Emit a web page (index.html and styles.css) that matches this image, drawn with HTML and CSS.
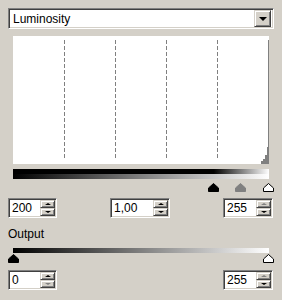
FILE: index.html
```html
<!DOCTYPE html>
<html lang="en">
<head>
  <meta charset="UTF-8">
  <title>Levels</title>
  <link rel="stylesheet" href="styles.css">
</head>
<body>
  <div class="levels">

    <!-- Channel selector -->
    <div class="combo">
      <span class="combo-text">Luminosity</span>
      <span class="combo-btn"><i class="tri-down"></i></span>
    </div>

    <!-- Histogram -->
    <div class="hist">
      <svg width="256" height="128" viewBox="0 0 256 128">
        <g stroke="#808080" stroke-width="1" stroke-dasharray="4 2">
          <line x1="51.5" y1="4" x2="51.5" y2="124" />
          <line x1="102.5" y1="4" x2="102.5" y2="124" />
          <line x1="153.5" y1="4" x2="153.5" y2="124" />
          <line x1="204.5" y1="4" x2="204.5" y2="124" />
        </g>
        <polygon fill="#808080" points="248,128 248,125 250,125 250,123 252,123 252,119 254,119 254,111 255,111 255,4 256,4 256,128" />
      </svg>
    </div>

    <!-- Input levels -->
    <div class="ramp ramp-in"><div class="ramp-top"></div><div class="ramp-bottom"></div></div>
    <div class="handles">
      <svg class="handle" style="left:200px" width="11" height="9" viewBox="0 0 11 9"><polygon points="5.5,0.5 10.5,5 10.5,8.5 0.5,8.5 0.5,5" fill="#000" stroke="#000" /></svg>
      <svg class="handle" style="left:227px" width="11" height="9" viewBox="0 0 11 9"><polygon points="5.5,0.5 10.5,5 10.5,8.5 0.5,8.5 0.5,5" fill="#808080" stroke="#808080" /></svg>
      <svg class="handle" style="left:255px" width="11" height="9" viewBox="0 0 11 9"><polygon points="5.5,0.5 10.5,5 10.5,8.5 0.5,8.5 0.5,5" fill="#fff" stroke="#000" /></svg>
    </div>
    <div class="spin-row">
      <div class="spin spin-sm">
        <span class="spin-val">200</span>
        <span class="spin-btns"><b class="sbtn"><i class="tri-up"></i></b><b class="sbtn"><i class="tri-down small"></i></b></span>
      </div>
      <div class="spin spin-md">
        <span class="spin-val">1,00</span>
        <span class="spin-btns"><b class="sbtn"><i class="tri-up"></i></b><b class="sbtn"><i class="tri-down small"></i></b></span>
      </div>
      <div class="spin spin-sm2">
        <span class="spin-val">255</span>
        <span class="spin-btns"><b class="sbtn"><i class="tri-up off"></i></b><b class="sbtn"><i class="tri-down small"></i></b></span>
      </div>
    </div>

    <!-- Output levels -->
    <div class="label">Output</div>
    <div class="ramp ramp-out"></div>
    <div class="handles">
      <svg class="handle" style="left:0px" width="11" height="9" viewBox="0 0 11 9"><polygon points="5.5,0.5 10.5,5 10.5,8.5 0.5,8.5 0.5,5" fill="#000" stroke="#000" /></svg>
      <svg class="handle" style="left:255px" width="11" height="9" viewBox="0 0 11 9"><polygon points="5.5,0.5 10.5,5 10.5,8.5 0.5,8.5 0.5,5" fill="#fff" stroke="#000" /></svg>
    </div>
    <div class="spin-row spin-row-out">
      <div class="spin spin-sm">
        <span class="spin-val">0</span>
        <span class="spin-btns"><b class="sbtn"><i class="tri-up"></i></b><b class="sbtn"><i class="tri-down small off"></i></b></span>
      </div>
      <div class="spin spin-sm2">
        <span class="spin-val">255</span>
        <span class="spin-btns"><b class="sbtn"><i class="tri-up off"></i></b><b class="sbtn"><i class="tri-down small"></i></b></span>
      </div>
    </div>

  </div>
</body>
</html>
```

FILE: styles.css
```css
* {
  box-sizing: border-box;
}

body {
  margin: 0;
  background: #d4d0c8;
  font-family: 'Liberation Sans', Arial, sans-serif;
  font-size: 12px;
  color: #000;
}

.levels {
  padding: 8px 0 0 8px;
  width: 282px;
}

/* sunken field, classic look */
.combo,
.spin {
  display: flex;
  align-items: center;
  background: #fff;
  border: 1px solid;
  border-color: #808080 #fff #fff #808080;
  box-shadow: inset 1px 1px #404040, inset -1px -1px #d4d0c8;
  padding: 2px;
}

.combo {
  width: 266px;
  height: 21px;
}

.combo-text {
  flex: 1;
  padding-left: 2px;
  line-height: 14px;
}

.combo-btn,
.sbtn {
  display: flex;
  align-items: center;
  justify-content: center;
  background: #d4d0c8;
  border: 1px solid;
  border-color: #d4d0c8 #404040 #404040 #d4d0c8;
  box-shadow: inset 1px 1px #fff, inset -1px -1px #808080;
}

.combo-btn {
  width: 17px;
  height: 17px;
}

.tri-down {
  width: 0;
  height: 0;
  border-left: 4px solid transparent;
  border-right: 4px solid transparent;
  border-top: 4px solid #000;
}

.tri-down.small {
  border-left-width: 3px;
  border-right-width: 3px;
  border-top-width: 2px;
}

.tri-up {
  width: 0;
  height: 0;
  border-left: 3px solid transparent;
  border-right: 3px solid transparent;
  border-bottom: 2px solid #000;
}

.tri-up.off {
  border-bottom-color: #808080;
}

.tri-down.off {
  border-top-color: #808080;
}

.hist {
  width: 256px;
  height: 128px;
  margin: 7px 0 0 5px;
  background: #fff;
}

.hist svg {
  display: block;
}

.ramp {
  width: 256px;
  margin-left: 5px;
}

.ramp-in {
  height: 10px;
  margin-top: 5px;
}

.ramp-top {
  height: 5px;
  background: linear-gradient(to right, #000 0%, #000 78.4%, #fff 100%);
}

.ramp-bottom {
  height: 5px;
  background: linear-gradient(to right, #000, #fff);
}

.ramp-out {
  height: 5px;
  margin-top: 7px;
  background: linear-gradient(to right, #000, #fff);
}

.handles {
  position: relative;
  width: 256px;
  height: 9px;
  margin: 4px 0 0 5px;
}

.ramp-out + .handles {
  margin-top: 1px;
}

.handle {
  position: absolute;
  top: 0;
  margin-left: -5px;
  display: block;
}

.spin-row {
  display: flex;
  justify-content: space-between;
  width: 265px;
  margin-top: 6px;
}

.spin-row-out {
  margin-top: 7px;
}

.spin {
  height: 20px;
  padding: 2px 1px 2px 3px;
}

.spin-sm { width: 49px; }
.spin-md { width: 60px; }
.spin-sm2 { width: 50px; }

.spin-val {
  flex: 1;
  line-height: 14px;
}

.spin-btns {
  display: flex;
  flex-direction: column;
  width: 15px;
  height: 16px;
}

.sbtn {
  flex: 1;
}

.label {
  margin-top: 9px;
  line-height: 14px;
}
```
